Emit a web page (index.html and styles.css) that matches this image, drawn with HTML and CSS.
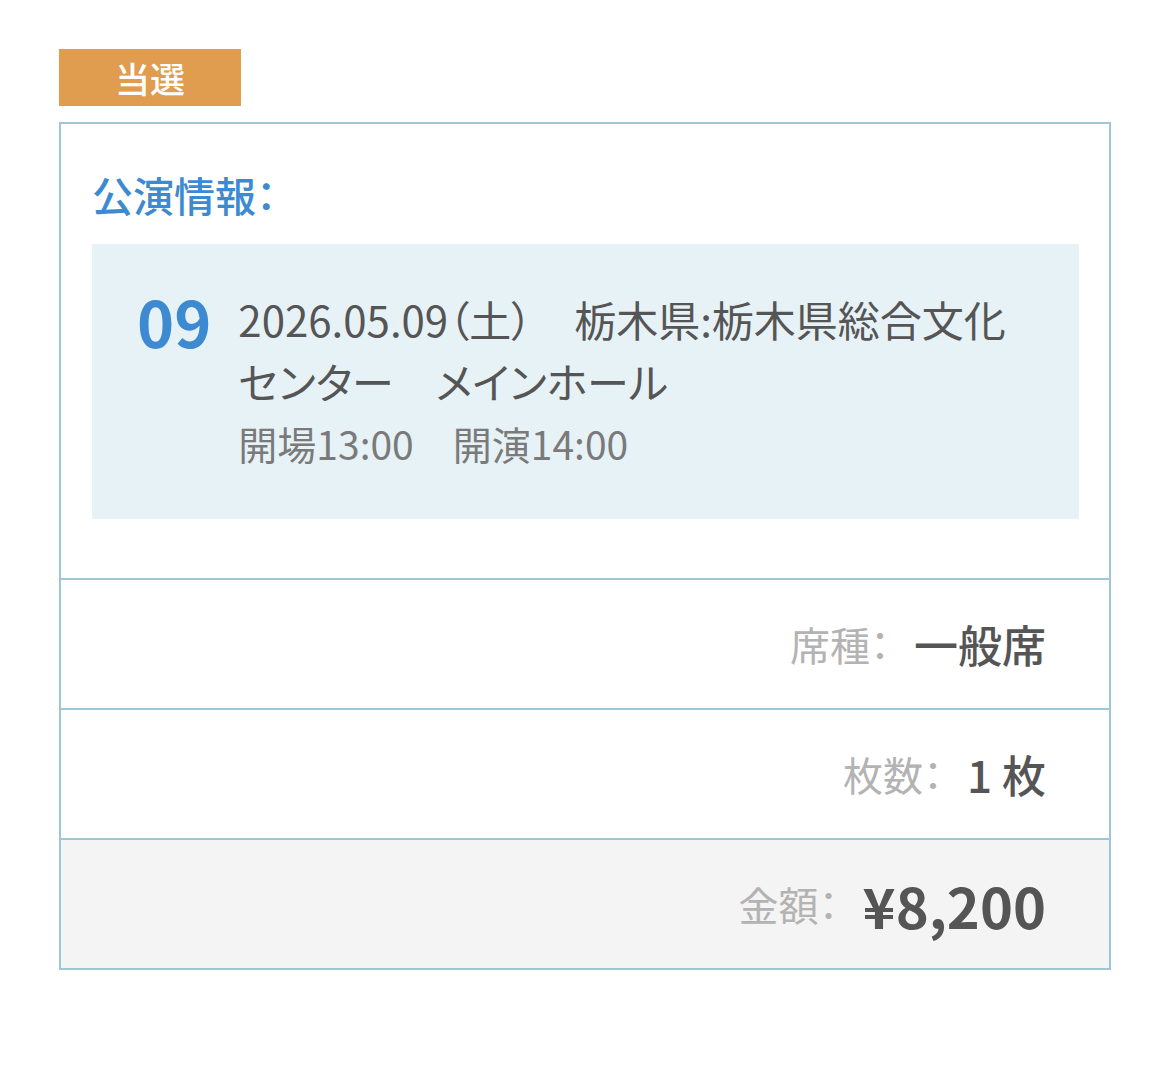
FILE: index.html
```html
<!DOCTYPE html>
<html lang="ja">
<head>
    <meta charset="UTF-8">
    <meta name="viewport" content="width=device-width, initial-scale=1.0">
    <title>抽選結果</title>
    <link rel="stylesheet" href="styles.css">
</head>
<body>

    <div class="result">
        <!-- 当落ラベル -->
        <div class="status-badge">当選</div>

        <div class="ticket-card">
            <!-- 公演情報 -->
            <div class="performance">
                <p class="section-title">公演情報：</p>
                <div class="performance-box">
                    <span class="day">09</span>
                    <div class="performance-detail">
                        <p class="venue">2026.05.09（土）　栃木県:栃木県総合文化センター　メインホール</p>
                        <p class="time">開場13:00　開演14:00</p>
                    </div>
                </div>
            </div>

            <!-- 申込内容 -->
            <div class="detail-row">
                <span class="label">席種：</span>
                <span class="value">一般席</span>
            </div>
            <div class="detail-row">
                <span class="label">枚数：</span>
                <span class="value">1 枚</span>
            </div>
            <div class="detail-row total">
                <span class="label">金額：</span>
                <span class="value">¥8,200</span>
            </div>
        </div>
    </div>

</body>
</html>
```

FILE: styles.css
```css
body {
    font-family: "Noto Sans CJK JP", "Noto Sans", sans-serif;
    font-feature-settings: "palt";
    background-color: #fff;
    color: #555;
    margin: 0;
    padding: 0;
}

p {
    margin: 0;
}

.result {
    width: 1052px;
    padding: 49px 0 0 59px;
}

/* 当選ラベル */
.status-badge {
    width: 182px;
    height: 57px;
    line-height: 57px;
    text-align: center;
    background-color: #e09d4f;
    color: #fff;
    font-size: 35px;
    font-weight: 500;
}

.ticket-card {
    margin-top: 16px;
    border: 2px solid #9dc7d7;
}

/* 公演情報 */
.performance {
    padding: 41px 30px 59px 31px;
}

.section-title {
    color: #3d8ad0;
    font-size: 41px;
    font-weight: 500;
    line-height: 58px;
    margin-bottom: 21px;
}

.performance-box {
    display: flex;
    align-items: flex-start;
    gap: 27px;
    background-color: #e7f2f7;
    padding: 44px 50px 45px 45px;
}

.day {
    color: #3d8ad0;
    font-size: 63px;
    font-weight: 700;
    line-height: 66px;
}

.performance-detail {
    flex: 1;
}

.venue {
    font-size: 42px;
    line-height: 62px;
    color: #555;
}

.time {
    font-size: 39px;
    line-height: 62px;
    color: #7a7a7a;
}

/* 申込内容 */
.detail-row {
    display: flex;
    justify-content: flex-end;
    align-items: center;
    height: 128px;
    padding-right: 63px;
    border-top: 2px solid #9dc7d7;
}

.detail-row .label {
    color: #b3b3b3;
    font-size: 40px;
    margin-right: 24px;
}

.detail-row .value {
    color: #555;
    font-size: 44px;
    font-weight: 500;
}

.detail-row.total {
    background-color: #f4f4f4;
}

.detail-row.total .value {
    font-size: 56px;
    font-weight: 700;
}
```
